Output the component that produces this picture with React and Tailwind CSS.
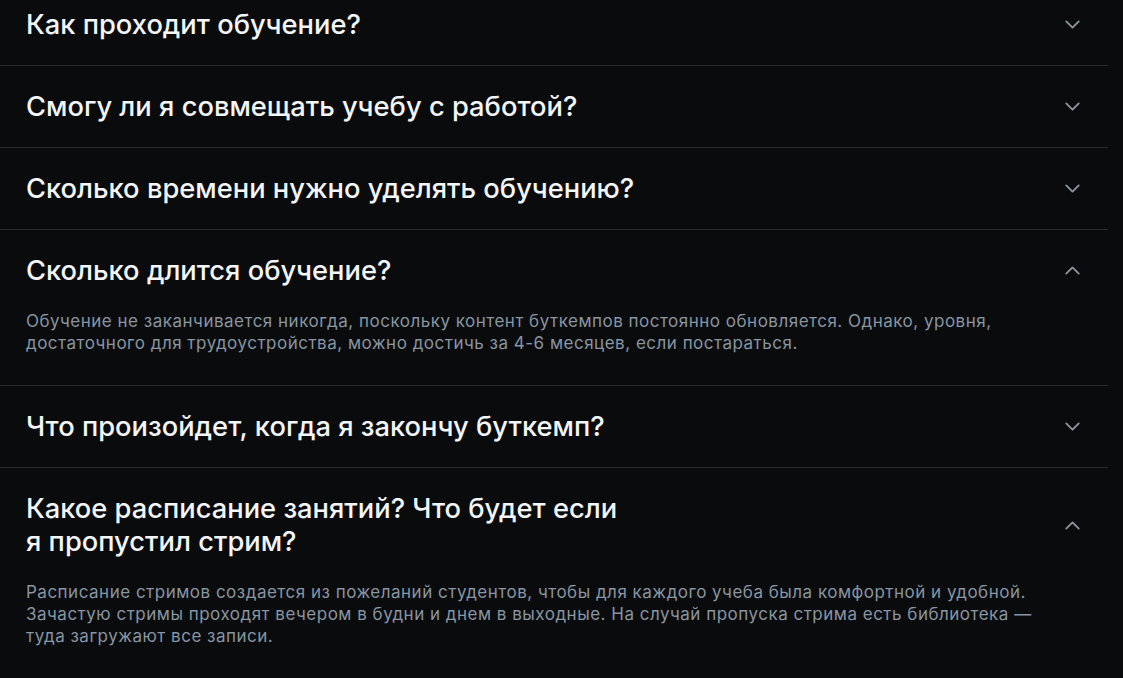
import { ChevronDown, ChevronUp } from 'lucide-react'

const ITEMS = [
  { q: 'Как проходит обучение?' },
  { q: 'Смогу ли я совмещать учебу с работой?' },
  { q: 'Сколько времени нужно уделять обучению?' },
  {
    q: 'Сколько длится обучение?',
    a: 'Обучение не заканчивается никогда, поскольку контент буткемпов постоянно обновляется. Однако, уровня, достаточного для трудоустройства, можно достичь за 4-6 месяцев, если постараться.',
  },
  { q: 'Что произойдет, когда я закончу буткемп?' },
  {
    q: 'Какое расписание занятий? Что будет если я пропустил стрим?',
    narrow: true,
    a: 'Расписание стримов создается из пожеланий студентов, чтобы для каждого учеба была комфортной и удобной. Зачастую стримы проходят вечером в будни и днем в выходные. На случай пропуска стрима есть библиотека\u00a0— туда загружают все записи.',
  },
]

function FaqRow({ item, last }) {
  const open = Boolean(item.a)
  return (
    <div className={last ? '' : 'border-b border-[#2a2b2f]'}>
      <div className="flex items-center justify-between pl-[26px] pr-[23px] py-6">
        <h3 className={`text-[27.3px] leading-[33px] font-medium text-[#f4f5f6] ${item.narrow ? 'max-w-[605px]' : ''}`}>
          {item.q}
        </h3>
        {open ? (
          <ChevronUp size={25} strokeWidth={1.75} className="text-[#8c96a0] shrink-0" />
        ) : (
          <ChevronDown size={25} strokeWidth={1.75} className="text-[#8c96a0] shrink-0" />
        )}
      </div>
      {open && (
        <p className="pl-[26px] pb-[31px] -mt-px max-w-[1040px] text-[17px] leading-[22px] tracking-[0.5px] text-[#8895a2]">
          {item.a}
        </p>
      )}
    </div>
  )
}

export default function App() {
  return (
    <div className="min-h-[678px] bg-[#0a0b0d] overflow-hidden font-['Inter',sans-serif]">
      <div className="w-[1108px] -mt-[16px]">
        {ITEMS.map((item, i) => (
          <FaqRow key={i} item={item} last={i === ITEMS.length - 1} />
        ))}
      </div>
    </div>
  )
}
